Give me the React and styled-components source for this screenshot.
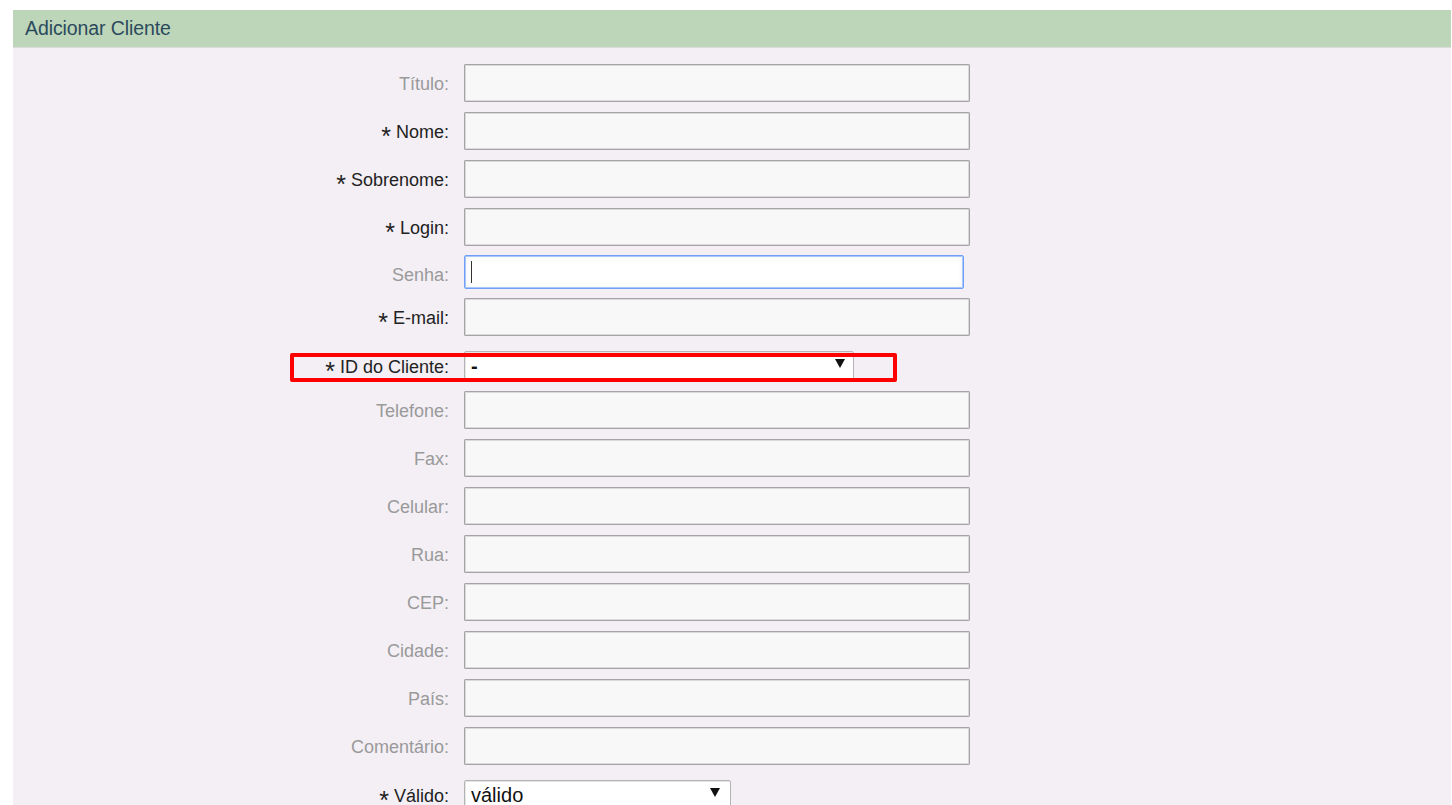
import React from "react";
import styled, { createGlobalStyle } from "styled-components";

const Global = createGlobalStyle`
  html, body { margin: 0; padding: 0; background: #ffffff; }
  body { font-family: "Liberation Sans", Arial, sans-serif; }
  * { box-sizing: border-box; }
`;

const Page = styled.div`
  padding: 10px 1px 0 13px;
  height: 805px;
  overflow: hidden;
`;

const Panel = styled.section`
  background: #f3eff5;
  min-height: 795px;
`;

const Header = styled.h2`
  margin: 0;
  height: 38px;
  background: #bdd6b9;
  border-bottom: 1px solid #dcdcdc;
  padding: 0 12px;
  display: flex;
  align-items: center;
  font-size: 19.5px;
  font-weight: normal;
  color: #2c4a5c;
  letter-spacing: -0.1px;
`;

const Form = styled.form`
  display: flex;
  flex-direction: column;
  padding-top: 16px;
`;

const Row = styled.div`
  position: relative;
  display: grid;
  grid-template-columns: 436px auto;
  column-gap: 15px;
  align-items: center;
  min-height: ${(p) => p.$minH || 0}px;
  margin-top: ${(p) => p.$mt ?? 10}px;
  &:first-child { margin-top: 0; }
`;

const Label = styled.label`
  display: flex;
  justify-content: flex-end;
  align-items: center;
  line-height: 20px;
  font-size: 18px;
  color: ${(p) => (p.$required ? "#222222" : "#9a9a9a")};
  white-space: nowrap;
  transform: translateY(1px);
`;

const Star = styled.span`
  display: inline-block;
  margin-right: 5px;
  font-size: 25px;
  line-height: 20px;
  height: 20px;
  color: #222;
  transform: translateY(4px);
`;

const TextInput = styled.input`
  width: ${(p) => p.$w || 506}px;
  height: ${(p) => p.$h || 38}px;
  border: 1px solid #a4a4a4;
  border-radius: 1px;
  box-shadow: inset 0 0 0 1px #dadada;
  background: #f8f8f8;
  font-family: "Liberation Sans", Arial, sans-serif;
  font-size: 18px;
  padding: 0 6px;
  outline: none;
`;

const FocusWrap = styled.div`
  position: relative;
  align-self: start;
  width: 500px;
  height: 34px;
  &::before {
    content: "";
    position: absolute;
    left: 7px;
    top: 6px;
    width: 1px;
    height: 22px;
    background: #333;
  }
`;

const FocusInput = styled.input`
  width: 100%;
  height: 100%;
  border: 1px solid #6f9ff6;
  border-radius: 2px;
  box-shadow: inset 0 0 0 1px #a9c7fb, inset 0 0 6px rgba(0, 0, 0, 0.06);
  background: #ffffff;
  outline: none;
  padding: 0 8px;
  font-size: 18px;
`;

const SelectWrap = styled.div`
  position: relative;
  width: ${(p) => p.$w}px;
  height: ${(p) => p.$h}px;
  &::after {
    content: "";
    position: absolute;
    right: ${(p) => p.$ar}px;
    top: 8px;
    width: 0;
    height: 0;
    border-left: 5px solid transparent;
    border-right: 5px solid transparent;
    border-top: 9px solid #111;
    pointer-events: none;
  }
`;

const Select = styled.select`
  appearance: none;
  -webkit-appearance: none;
  width: 100%;
  height: 100%;
  border: 1px solid #b4b4b4;
  border-radius: 2px 2px 0 0;
  background: #ffffff;
  box-shadow: inset 1px 1px 0 #e6e6e6;
  font-family: "Liberation Sans", Arial, sans-serif;
  font-size: 20px;
  font-weight: ${(p) => (p.$bold ? "bold" : "normal")};
  color: #111;
  padding: 0 6px;
  outline: none;
`;

const Highlight = styled.div`
  position: absolute;
  left: 277px;
  top: 2px;
  width: 607px;
  height: 29px;
  border: 4px solid #ff0000;
  border-radius: 2px;
  pointer-events: none;
`;

const fields = [
  { label: "Título" },
  { label: "Nome", req: true },
  { label: "Sobrenome", req: true },
  { label: "Login", req: true },
  { label: "Senha", type: "focus", mt: 9, minH: 38 },
  { label: "E-mail", req: true, mt: 5 },
  { label: "ID do Cliente", req: true, type: "selectId", mt: 15 },
  { label: "Telefone", mt: 11 },
  { label: "Fax" },
  { label: "Celular" },
  { label: "Rua" },
  { label: "CEP" },
  { label: "Cidade" },
  { label: "País" },
  { label: "Comentário" },
  { label: "Válido", req: true, type: "selectValid", mt: 15 },
];

function Control({ f }) {
  if (f.type === "focus") {
    return (
      <FocusWrap>
        <FocusInput type="password" />
      </FocusWrap>
    );
  }
  if (f.type === "selectId") {
    return (
      <SelectWrap $w={390} $h={29} $ar={9}>
        <Select defaultValue="-" $bold>
          <option value="-">-</option>
        </Select>
      </SelectWrap>
    );
  }
  if (f.type === "selectValid") {
    return (
      <SelectWrap $w={267} $h={30} $ar={11}>
        <Select defaultValue="válido">
          <option value="válido">válido</option>
          <option value="inválido">inválido</option>
        </Select>
      </SelectWrap>
    );
  }
  return <TextInput type="text" />;
}

export default function App() {
  return (
    <>
      <Global />
      <Page>
        <Panel>
          <Header>Adicionar Cliente</Header>
          <Form>
            {fields.map((f) => (
              <Row key={f.label} $mt={f.mt} $minH={f.minH}>
                <Label $required={f.req}>
                  {f.req && <Star>*</Star>}
                  {f.label}:
                </Label>
                <Control f={f} />
                {f.type === "selectId" && <Highlight />}
              </Row>
            ))}
          </Form>
        </Panel>
      </Page>
    </>
  );
}
